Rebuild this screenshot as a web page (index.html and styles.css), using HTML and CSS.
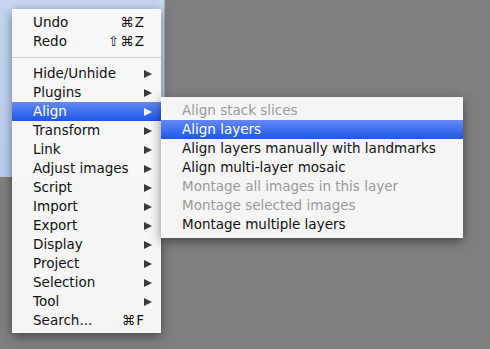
FILE: index.html
```html
<!DOCTYPE html>
<html lang="en">
<head>
  <meta charset="UTF-8">
  <title>Edit menu</title>
  <link rel="stylesheet" href="styles.css">
</head>
<body>
  <div class="desk">
    <div class="panel"></div>

    <ul class="menu main">
      <li class="item"><span>Undo</span><span class="key">&#8984;Z</span></li>
      <li class="item"><span>Redo</span><span class="key">&#8679;&#8984;Z</span></li>
      <li class="sep"></li>
      <li class="item"><span>Hide/Unhide</span><span class="arrow"></span></li>
      <li class="item"><span>Plugins</span><span class="arrow"></span></li>
      <li class="item active"><span>Align</span><span class="arrow"></span></li>
      <li class="item"><span>Transform</span><span class="arrow"></span></li>
      <li class="item"><span>Link</span><span class="arrow"></span></li>
      <li class="item"><span>Adjust images</span><span class="arrow"></span></li>
      <li class="item"><span>Script</span><span class="arrow"></span></li>
      <li class="item"><span>Import</span><span class="arrow"></span></li>
      <li class="item"><span>Export</span><span class="arrow"></span></li>
      <li class="item"><span>Display</span><span class="arrow"></span></li>
      <li class="item"><span>Project</span><span class="arrow"></span></li>
      <li class="item"><span>Selection</span><span class="arrow"></span></li>
      <li class="item"><span>Tool</span><span class="arrow"></span></li>
      <li class="item"><span>Search...</span><span class="key">&#8984;F</span></li>
    </ul>

    <ul class="menu sub">
      <li class="item off">Align stack slices</li>
      <li class="item active">Align layers</li>
      <li class="item">Align layers manually with landmarks</li>
      <li class="item">Align multi-layer mosaic</li>
      <li class="item off">Montage all images in this layer</li>
      <li class="item off">Montage selected images</li>
      <li class="item">Montage multiple layers</li>
    </ul>
  </div>
</body>
</html>
```

FILE: styles.css
```css
body {
  margin: 0;
  background: #7f7f7f;
  font-family: "DejaVu Sans", "Noto Sans", sans-serif;
  font-size: 13.5px;
}
.desk {
  position: relative;
  width: 490px;
  height: 349px;
  overflow: hidden;
}
.panel {
  width: 164px;
  height: 177px;
  background: linear-gradient(#c6d6f0, #b8cdee);
  border-right: 1px solid #9fb0c8;
}
.menu {
  position: absolute;
  list-style: none;
  margin: 0;
  padding: 4px 0;
  background: rgba(248, 248, 248, 0.98);
  box-shadow: 0 3px 10px rgba(0, 0, 0, 0.45);
  color: #111;
}
.main {
  left: 12px;
  top: 9px;
  width: 149px;
  padding-bottom: 3px;
}
.sub {
  left: 161px;
  top: 97px;
  width: 302px;
}
.item {
  height: 19px;
  line-height: 19px;
  white-space: nowrap;
}
.main .item {
  display: flex;
  justify-content: space-between;
  align-items: center;
  padding: 0 9px 0 21px;
}
.sub .item {
  padding-left: 21px;
}
.item.active {
  background: linear-gradient(#6489f2, #1c57ea);
  color: #fff;
}
.item.off {
  color: #9a9a9a;
}
.key {
  padding-right: 7px;
  letter-spacing: 1px;
}
.sep {
  height: 1px;
  background: #d0d0d0;
  margin: 6px 0 6px;
}
.arrow {
  width: 0;
  height: 0;
  border-top: 4.5px solid transparent;
  border-bottom: 4.5px solid transparent;
  border-left: 8px solid #3a3a3a;
}
.active .arrow {
  border-left-color: #fff;
}
```
